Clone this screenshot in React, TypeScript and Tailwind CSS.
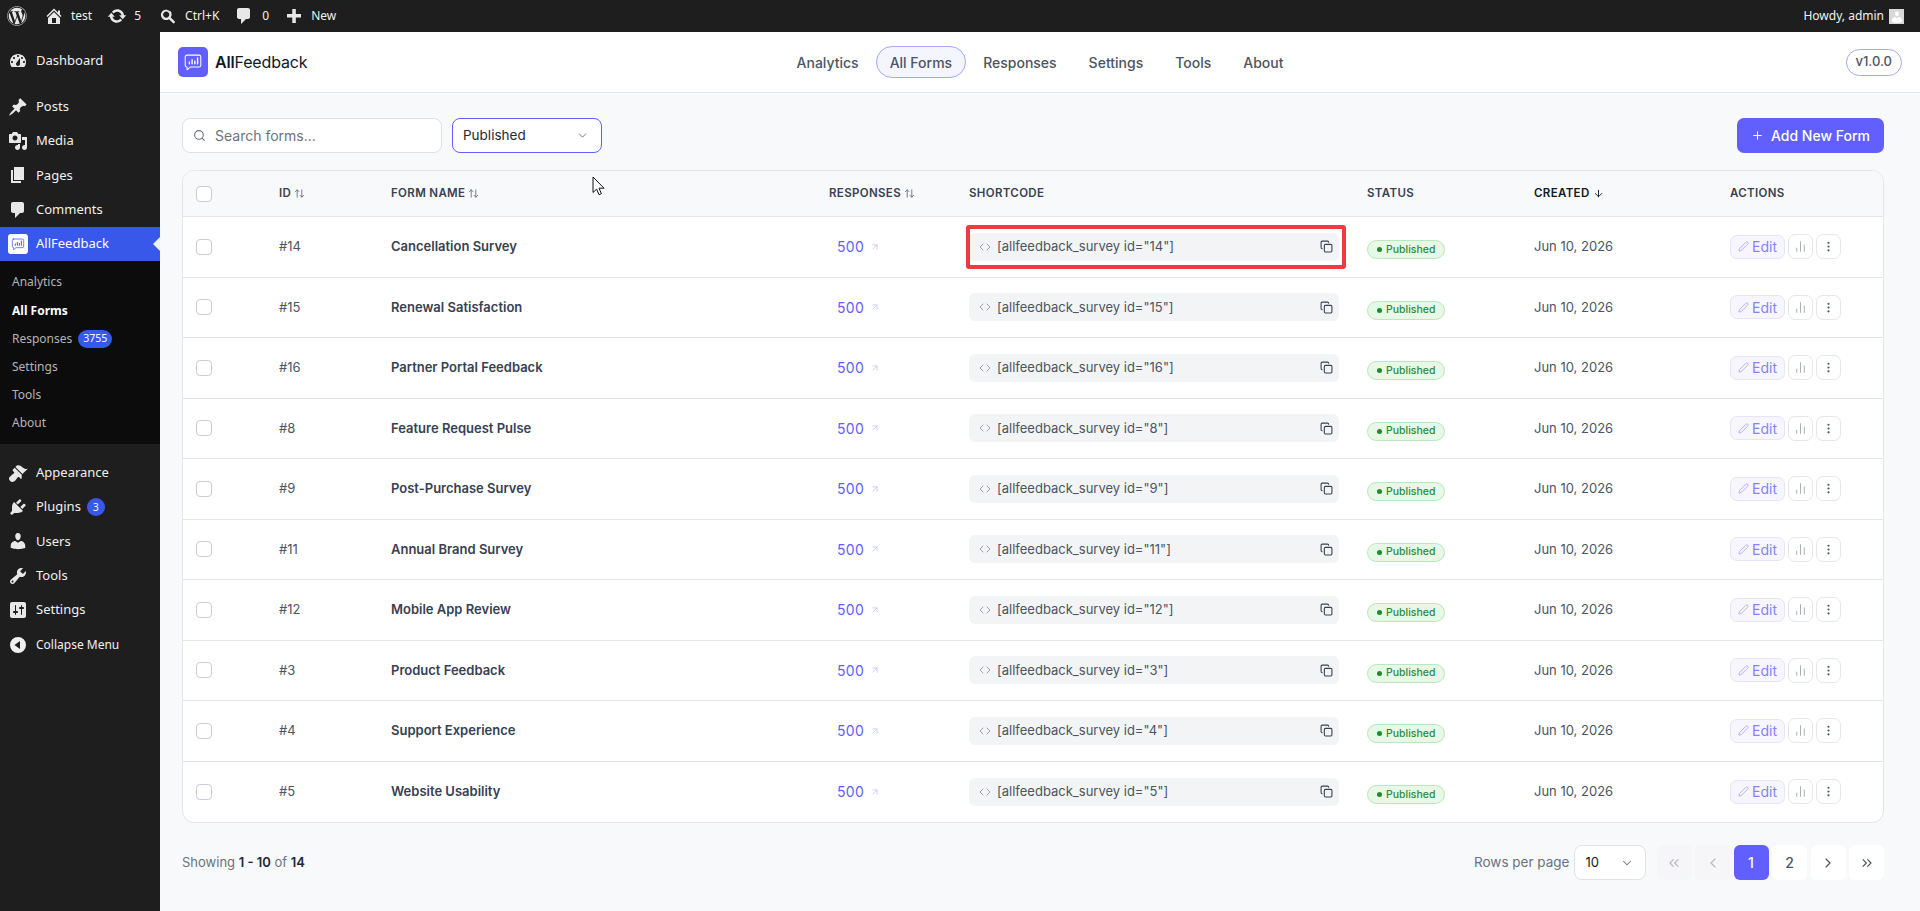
import React from "react";
import { FaWordpress } from "react-icons/fa";
import {
  ArrowDown, ArrowUpDown, ArrowUpRight, ChartNoAxesColumn, ChevronDown, ChevronLeft, ChevronRight,
  ChevronsLeft, ChevronsRight, Code, Copy, EllipsisVertical, Pen, Plus, Search,
} from "lucide-react";

const D: Record<string, string> = {
  home: "M16 8.5l1.53 1.53-1.06 1.06L10 4.62l-6.47 6.47-1.06-1.06L10 2.5l4 4v-2h2v4zm-6-2.46l6 5.99V18H4v-5.97zM12 17v-5H8v5h4z",
  update: "M10.2 3.28c3.53 0 6.43 2.61 6.92 6h2.08l-3.5 4-3.5-4h2.32c-.45-1.97-2.21-3.45-4.32-3.45-1.45 0-2.73.71-3.54 1.78L4.95 5.66C6.23 4.2 8.11 3.28 10.2 3.28zm-.4 13.44c-3.52 0-6.43-2.61-6.92-6H.8l3.5-4c1.17 1.33 2.33 2.67 3.5 4H5.48c.45 1.97 2.21 3.45 4.32 3.45 1.45 0 2.73-.71 3.54-1.78l1.71 1.95c-1.28 1.46-3.15 2.38-5.25 2.38z",
  comment: "M5 2h9c1.1 0 2 .9 2 2v7c0 1.1-.9 2-2 2h-2l-5 5v-5H5c-1.1 0-2-.9-2-2V4c0-1.1.9-2 2-2z",
  plus: "M17 8v3.5h-5.2V17H8.3v-5.5H3V8h5.3V3h3.5v5H17z",
  search: "M12.14 4.78c1.8 1.8 2 4.6.6 6.63l3.93 3.93c.4.4.4 1.05 0 1.45l-.29.29c-.4.4-1.05.4-1.45 0l-3.93-3.93c-2.03 1.4-4.83 1.2-6.63-.6-2-2-2-5.26 0-7.27 2-2 5.27-2 7.27 0zM6 6.4c-1.2 1.2-1.2 3.2 0 4.4 1.2 1.2 3.2 1.2 4.4 0 1.2-1.2 1.2-3.2 0-4.4-1.2-1.2-3.2-1.2-4.4 0z",
  dashboard: "M3.76 16h12.48c1.1-1.37 1.76-3.11 1.76-5 0-4.42-3.58-8-8-8s-8 3.58-8 8c0 1.89.66 3.63 1.76 5zM10 4c.55 0 1 .45 1 1s-.45 1-1 1-1-.45-1-1 .45-1 1-1zM6 6c.55 0 1 .45 1 1s-.45 1-1 1-1-.45-1-1 .45-1 1-1zm8 0c.55 0 1 .45 1 1s-.45 1-1 1-1-.45-1-1 .45-1 1-1zm-5.37 5.55L12 7v6c0 1.1-.9 2-2 2s-2-.9-2-2c0-.57.24-1.08.63-1.45zM4 10c.55 0 1 .45 1 1s-.45 1-1 1-1-.45-1-1 .45-1 1-1zm12 0c.55 0 1 .45 1 1s-.45 1-1 1-1-.45-1-1 .45-1 1-1z",
  post: "M10.44 3.02l1.82-1.82 6.36 6.35-1.83 1.82c-1.05-.68-2.48-.57-3.41.36l-.75.75c-.92.93-1.04 2.35-.35 3.41l-1.83 1.82-2.41-2.41-2.8 2.79c-.42.42-3.38 2.71-3.8 2.29s1.86-3.39 2.28-3.81l2.79-2.79L4.1 9.36l1.83-1.82c1.05.69 2.48.57 3.4-.36l.75-.75c.93-.92 1.05-2.35.36-3.41z",
  media: "M13 11V4c0-.55-.45-1-1-1h-1.67L9 1H5L3.67 3H2c-.55 0-1 .45-1 1v7c0 .55.45 1 1 1h10c.55 0 1-.45 1-1zM7 4.5c1.38 0 2.5 1.12 2.5 2.5S8.38 9.5 7 9.5 4.5 8.38 4.5 7 5.62 4.5 7 4.5zM14 6h5v10.5c0 1.38-1.12 2.5-2.5 2.5S14 17.88 14 16.5s1.12-2.5 2.5-2.5c.17 0 .34.02.5.05V9h-3V6zm-4 8.05V13h2v3.5c0 1.38-1.12 2.5-2.5 2.5S7 17.88 7 16.5 8.12 14 9.5 14c.17 0 .34.02.5.05z",
  page: "M6 15V2h10v13H6zm-1 1h8v2H3V5h2v11z",
  appearance: "M14.48 11.06L7.41 3.99l1.5-1.5c.5-.56 2.3-.47 3.51.32 1.21.8 1.43 1.28 2.91 2.1 1.18.64 2.45 1.26 4.45.85zm-.71.71L6.7 4.7 4.93 6.47c-.39.39-.39 1.02 0 1.41l1.06 1.06c.39.39.39 1.03 0 1.42-.6.6-1.43 1.11-2.21 1.69-.35.26-.7.53-1.01.84C1.43 13.71 1 14.65 1 15.5c0 .52.15 1.04.41 1.5.2.34.46.65.75.93h.01c.99.98 2.33 1.41 3.75.66.48-.25.96-.6 1.4-1.04.3-.3.58-.64.84-1 .58-.78 1.09-1.61 1.69-2.21.39-.39 1.03-.39 1.42 0l1.06 1.06c.39.39 1.02.39 1.41 0z",
  plugins: "M13.11 4.36L9.87 7.6 8 5.73l3.24-3.24c.35-.34 1.05-.2 1.56.32.52.51.66 1.21.31 1.55zm-8 1.77l.91-1.12 9.01 9.01-1.19.84c-.71.71-2.63 1.16-3.82 1.16H6.14L4.9 17.26c-.59.59-1.54.59-2.12 0-.59-.58-.59-1.53 0-2.12l1.24-1.24v-3.88c0-1.13.4-3.19 1.09-3.89zm7.26 3.97l3.24-3.24c.34-.35 1.04-.21 1.55.31.52.51.66 1.21.31 1.55l-3.24 3.25z",
  users: "M10 9.25c-2.27 0-2.73-3.44-2.73-3.44C7 4.02 7.82 2 9.97 2c2.16 0 2.98 2.02 2.71 3.81 0 0-.41 3.44-2.68 3.44zm0 2.57L12.72 10c2.39 0 4.52 2.33 4.52 4.53v2.49s-3.65 1.13-7.24 1.13c-3.65 0-7.24-1.13-7.24-1.13v-2.49c0-2.25 1.94-4.48 4.47-4.48z",
  tools: "M16.68 9.77c-1.34 1.34-3.3 1.67-4.95.99l-5.41 6.52c-.99.99-2.59.99-3.58 0s-.99-2.59 0-3.57l6.52-5.42c-.68-1.65-.35-3.61.99-4.95 1.28-1.28 3.12-1.62 4.72-1.06l-2.89 2.89 2.82 2.82 2.86-2.87c.53 1.58.18 3.39-1.08 4.65zM3.81 16.21c.4.39 1.04.39 1.43 0 .4-.4.4-1.04 0-1.43-.39-.4-1.03-.4-1.43 0-.39.39-.39 1.03 0 1.43z",
  settings: "M18 16V4c0-1.1-.9-2-2-2H4c-1.1 0-2 .9-2 2v12c0 1.1.9 2 2 2h12c1.1 0 2-.9 2-2zM8 11h1c.55 0 1 .45 1 1s-.45 1-1 1H8v1.5c0 .28-.22.5-.5.5s-.5-.22-.5-.5V13H6c-.55 0-1-.45-1-1s.45-1 1-1h1V5.5c0-.28.22-.5.5-.5s.5.22.5.5V11zm5-2h-1c-.55 0-1-.45-1-1s.45-1 1-1h1V5.5c0-.28.22-.5.5-.5s.5.22.5.5V7h1c.55 0 1 .45 1 1s-.45 1-1 1h-1v5.5c0 .28-.22.5-.5.5s-.5-.22-.5-.5V9z",
  collapse: "M10 2a8 8 0 1 0 0 16 8 8 0 0 0 0-16zm2 4v8L6.5 10 12 6z",
};

function Dash({ name, className }: { name: string; className?: string }) {
  return (
    <svg viewBox="0 0 20 20" className={className} fill="currentColor" fillRule="evenodd" clipRule="evenodd">
      <path d={D[name]} />
    </svg>
  );
}

function ChatLogo({ className, stroke }: { className?: string; stroke: string }) {
  return (
    <svg viewBox="0 0 24 24" className={className} fill="none" stroke={stroke} strokeWidth="1.1" strokeLinecap="round" strokeLinejoin="round">
      <path d="M5.5 4.5h13a2 2 0 0 1 2 2v9a2 2 0 0 1-2 2H9l-3.5 3v-3a2 2 0 0 1-2-2v-9a2 2 0 0 1 2-2z" />
      <path strokeWidth="1.5" d="M8 14v-2M11 14V9.5M14 14v-3M17 14V7.5" />
    </svg>
  );
}

const topMenu = [
  { icon: "dashboard", label: "Dashboard" },
];
const contentMenu = [
  { icon: "post", label: "Posts" },
  { icon: "media", label: "Media" },
  { icon: "page", label: "Pages" },
  { icon: "comment", label: "Comments" },
];
const bottomMenu = [
  { icon: "appearance", label: "Appearance" },
  { icon: "plugins", label: "Plugins", badge: "3" },
  { icon: "users", label: "Users" },
  { icon: "tools", label: "Tools" },
  { icon: "settings", label: "Settings" },
];

function MenuItem({ icon, label, badge }: { icon: string; label: string; badge?: string }) {
  return (
    <div className="h-[34.4px] flex items-center text-[13px] text-[#f0f0f0]">
      <span className="w-[36px] flex justify-center text-[#e8e8e8]">
        <Dash name={icon} className="w-[20px] h-[20px]" />
      </span>
      <span>{label}</span>
      {badge && (
        <span className="ml-[6px] w-[18px] h-[18px] rounded-full bg-[#3858e9] text-white text-[10px] flex items-center justify-center">
          {badge}
        </span>
      )}
    </div>
  );
}

function Sidebar() {
  return (
    <aside className="w-[160px] shrink-0 bg-[#1e1e1e] pt-[12px] font-['Noto_Sans',sans-serif]">
      {topMenu.map((m) => <MenuItem key={m.label} {...m} />)}
      <div className="h-[11px]" />
      {contentMenu.map((m) => <MenuItem key={m.label} {...m} />)}
      <div className="relative h-[34.4px] flex items-center bg-[#3858e9] text-white text-[13px]">
        <span className="w-[36px] flex justify-center">
          <span className="w-[20px] h-[20px] rounded-[3px] bg-white flex items-center justify-center">
            <ChatLogo className="w-[16px] h-[16px]" stroke="#3858e9" />
          </span>
        </span>
        <span>AllFeedback</span>
        <span className="absolute right-0 top-[10px] w-0 h-0 border-y-[7px] border-y-transparent border-r-[7px] border-r-[#f0f0f1]" />
      </div>
      <div className="bg-[#0c0c0c] py-[7px] text-[12px] text-[#b4b4b4]">
        <div className="h-[28.2px] pl-[12px] flex items-center">Analytics</div>
        <div className="h-[28.2px] pl-[12px] flex items-center font-bold text-white">All Forms</div>
        <div className="h-[28.2px] pl-[12px] flex items-center">
          Responses
          <span className="ml-[6px] h-[18px] px-[5px] rounded-full bg-[#3858e9] text-white text-[10.5px] flex items-center">3755</span>
        </div>
        <div className="h-[28.2px] pl-[12px] flex items-center">Settings</div>
        <div className="h-[28.2px] pl-[12px] flex items-center">Tools</div>
        <div className="h-[28.2px] pl-[12px] flex items-center">About</div>
      </div>
      <div className="h-[11px]" />
      {bottomMenu.map((m) => <MenuItem key={m.label} {...m} />)}
      <div className="h-[34.4px] flex items-center text-[12px] text-[#f0f0f0]">
        <span className="w-[36px] flex justify-center">
          <Dash name="collapse" className="w-[20px] h-[20px]" />
        </span>
        <span>Collapse Menu</span>
      </div>
    </aside>
  );
}

function AdminBar() {
  const Item = ({ icon, label, cls }: { icon: string; label: string; cls: string }) => (
    <div className={`flex items-center ${cls}`}>
      <Dash name={icon} className="w-[20px] h-[20px] text-[#e8e8e8]" />
      <span>{label}</span>
    </div>
  );
  return (
    <header className="h-[32px] shrink-0 bg-[#1e1e1e] text-[#f0f0f0] text-[12px] flex items-center pl-[7px] pr-[16px] font-['Noto_Sans',sans-serif]">
      <FaWordpress className="w-[20px] h-[20px] text-[#e8e8e8]" />
      <Item icon="home" label="test" cls="ml-[17px] gap-[7px]" />
      <Item icon="update" label="5" cls="ml-[15px] gap-[7px]" />
      <Item icon="search" label="Ctrl+K" cls="ml-[17px] gap-[7px]" />
      <Item icon="comment" label="0" cls="ml-[15px] gap-[8px]" />
      <Item icon="plus" label="New" cls="ml-[15px] gap-[7px]" />
      <div className="ml-auto flex items-center gap-[5px]">
        <span>Howdy, admin</span>
        <span className="w-[15px] h-[15px] bg-[#d8d8d8] flex items-end justify-center overflow-hidden">
          <Dash name="users" className="w-[14px] h-[14px] text-white" />
        </span>
      </div>
    </header>
  );
}

const navItems = ["Analytics", "All Forms", "Responses", "Settings", "Tools", "About"];

function AppHeader() {
  return (
    <div className="h-[61px] shrink-0 bg-white border-b border-[#e2e5ea] grid grid-cols-[1fr_auto_1fr] items-center pl-[18px] pr-[18px]">
      <div className="flex items-center gap-[7px]">
        <span className="w-[30px] h-[30px] rounded-[5px] bg-[#6160ff] flex items-center justify-center">
          <ChatLogo className="w-[22px] h-[22px]" stroke="#ffffff" />
        </span>
        <span className="text-[16px] text-[#111827] tracking-[-0.01em]"><span className="font-semibold">All</span>Feedback</span>
      </div>
      <nav className="flex items-center gap-[2px] text-[14px] font-medium text-[#4b5563]">
        {navItems.map((n) =>
          n === "All Forms" ? (
            <span key={n} className="h-[32px] px-[13px] flex items-center rounded-full border border-[#a5a8f8] bg-[#f5f5ff]">{n}</span>
          ) : (
            <span key={n} className="h-[32px] px-[14px] flex items-center border border-transparent">{n}</span>
          ),
        )}
      </nav>
      <div className="flex justify-end">
        <span className="h-[27px] px-[9px] rounded-full border border-[#a5a8f8] text-[13px] font-medium text-[#4b5563] flex items-center">v1.0.0</span>
      </div>
    </div>
  );
}

const rows = [
  ["14", "Cancellation Survey"],
  ["15", "Renewal Satisfaction"],
  ["16", "Partner Portal Feedback"],
  ["8", "Feature Request Pulse"],
  ["9", "Post-Purchase Survey"],
  ["11", "Annual Brand Survey"],
  ["12", "Mobile App Review"],
  ["3", "Product Feedback"],
  ["4", "Support Experience"],
  ["5", "Website Usability"],
];

const gridCols = "grid grid-cols-[96px_112px_438px_140px_398px_167px_196px_1fr] items-center";

function Checkbox() {
  return <span className="block ml-[13px] w-[16px] h-[16px] rounded-[4px] border border-[#c9ccd3] bg-white" />;
}

function Th({ children, sort, dark }: { children: React.ReactNode; sort?: boolean; dark?: boolean }) {
  return (
    <div className={`flex items-center gap-[3px] text-[11.5px] font-semibold uppercase tracking-[0.03em] ${dark ? "text-[#111827]" : "text-[#374151]"}`}>
      {children}
      {sort && <ArrowUpDown className="w-[11px] h-[11px] text-[#6b7280]" strokeWidth={2} />}
    </div>
  );
}

function Row({ id, name, last, first }: { id: string; name: string; last: boolean; first: boolean }) {
  return (
    <div className={`${gridCols} h-[60.5px] ${last ? "" : "border-b border-[#e2e5ea]"}`}>
      <Checkbox />
      <div className="text-[13px] text-[#4b5563]">#{id}</div>
      <div className="text-[13px] font-semibold text-[#374151]">{name}</div>
      <div className="pl-[8px] flex items-center gap-[6px] text-[14px] text-[#6160ff] tracking-[0.02em]">
        500
        <ArrowUpRight className="w-[10px] h-[10px] text-[#c4c4fb]" strokeWidth={2} />
      </div>
      <div className="relative">
        <div className="w-[370px] h-[28px] rounded-[6px] bg-[#f3f4f6] flex items-center pl-[10px] pr-[6px] text-[13px] text-[#4b5563]">
          <Code className="w-[12px] h-[12px] text-[#9ca3af] mr-[6px]" strokeWidth={2} />
          <span>[allfeedback_survey id="{id}"]</span>
          <Copy className="ml-auto w-[13px] h-[13px] text-[#374151]" strokeWidth={2} />
        </div>
        {first && <div className="absolute left-[-3px] top-[-8px] w-[380px] h-[44px] rounded-[3px] border-[4px] border-[#ef3a3e] pointer-events-none" />}
      </div>
      <div>
        <span className="inline-flex items-center gap-[4px] h-[19px] w-[78px] pl-[9px] rounded-full bg-[#e7f8e7] border border-[#b8e8bb] text-[10.5px] font-medium text-[#2e8b3a]">
          <span className="w-[5px] h-[5px] rounded-full bg-[#1f8a2f]" />
          Published
        </span>
      </div>
      <div className="text-[13px] text-[#4b5563]">Jun 10, 2026</div>
      <div className="flex items-center gap-[3px]">
        <span className="h-[24px] w-[55px] rounded-[7px] border border-[#e6e4f6] bg-[#f7f6ff] flex items-center justify-center gap-[3px] text-[14px] text-[#8583fb]">
          <Pen className="w-[11px] h-[11px] text-[#a5a3fb]" strokeWidth={1.8} />
          Edit
        </span>
        <span className="h-[25px] w-[25px] rounded-[7px] border border-[#e5e7eb] bg-white flex items-center justify-center">
          <ChartNoAxesColumn className="w-[13px] h-[13px] text-[#9ca3af]" strokeWidth={1.6} />
        </span>
        <span className="h-[25px] w-[25px] rounded-[7px] border border-[#e5e7eb] bg-white flex items-center justify-center">
          <EllipsisVertical className="w-[13px] h-[13px] text-[#4b5563]" strokeWidth={2} />
        </span>
      </div>
    </div>
  );
}

function FormsTable() {
  return (
    <div className="mt-[17px] rounded-[12px] border border-[#e2e5ea] bg-white overflow-visible">
      <div className={`${gridCols} h-[46px] bg-[#f8f9fb] rounded-t-[12px] border-b border-[#e2e5ea]`}>
        <Checkbox />
        <Th sort>ID</Th>
        <Th sort>Form Name</Th>
        <Th sort>Responses</Th>
        <Th>Shortcode</Th>
        <Th>Status</Th>
        <Th dark>
          Created
          <ArrowDown className="w-[11px] h-[11px] text-[#111827]" strokeWidth={2} />
        </Th>
        <Th>Actions</Th>
      </div>
      {rows.map(([id, name], i) => (
        <Row key={id} id={id} name={name} first={i === 0} last={i === rows.length - 1} />
      ))}
    </div>
  );
}

function PageBtn({ children, kind }: { children: React.ReactNode; kind?: "active" | "disabled" }) {
  const cls =
    kind === "active" ? "bg-[#6160ff] text-white" : kind === "disabled" ? "bg-[#f6f6f8] text-[#b5b8bf]" : "bg-white text-[#4b5563]";
  return <span className={`w-[35px] h-[35px] rounded-[6px] flex items-center justify-center text-[14px] font-medium ${cls}`}>{children}</span>;
}

function Footer() {
  return (
    <div className="mt-[22px] flex items-center justify-between">
      <div className="text-[13px] text-[#6b7280]">
        Showing <span className="font-semibold text-[#1f2937]">1 - 10</span> of <span className="font-semibold text-[#1f2937]">14</span>
      </div>
      <div className="flex items-center">
        <span className="text-[13.5px] text-[#6b7280] mr-[4px]">Rows per page</span>
        <span className="w-[72px] h-[35px] rounded-[8px] border border-[#dfe1e6] bg-white flex items-center justify-between pl-[11px] pr-[11px] text-[13px] text-[#111827]">
          10
          <ChevronDown className="w-[14px] h-[14px] text-[#6b7280]" strokeWidth={1.75} />
        </span>
        <div className="ml-[11px] flex items-center gap-[3.5px]">
          <PageBtn kind="disabled"><ChevronsLeft className="w-[16px] h-[16px]" strokeWidth={1.75} /></PageBtn>
          <PageBtn kind="disabled"><ChevronLeft className="w-[16px] h-[16px]" strokeWidth={1.75} /></PageBtn>
          <PageBtn kind="active">1</PageBtn>
          <PageBtn>2</PageBtn>
          <PageBtn><ChevronRight className="w-[16px] h-[16px]" strokeWidth={1.75} /></PageBtn>
          <PageBtn><ChevronsRight className="w-[16px] h-[16px]" strokeWidth={1.75} /></PageBtn>
        </div>
      </div>
    </div>
  );
}

export default function App() {
  return (
    <div className="h-screen flex flex-col overflow-hidden relative font-['Inter',sans-serif]">
      <AdminBar />
      <div className="flex-1 flex min-h-0">
        <Sidebar />
        <main className="flex-1 min-w-0 flex flex-col bg-[#f8f9fb]">
          <AppHeader />
          <div className="pl-[22px] pr-[36px] pt-[25px]">
            <div className="flex items-center">
              <div className="w-[260px] h-[35px] rounded-[8px] border border-[#dfe1e6] bg-white flex items-center pl-[10px] gap-[9px] text-[14px] text-[#6b7280]">
                <Search className="w-[13px] h-[13px] text-[#6b7280]" strokeWidth={2} />
                <span>Search forms...</span>
              </div>
              <div className="ml-[10px] w-[150px] h-[35px] rounded-[8px] border border-[#6160ff] bg-white flex items-center justify-between pl-[10px] pr-[12px] text-[13.5px] text-[#1f2937]">
                Published
                <ChevronDown className="w-[13px] h-[13px] text-[#6b7280]" strokeWidth={1.75} />
              </div>
              <div className="ml-auto w-[147px] h-[35px] rounded-[7px] bg-[#6160ff] text-white text-[14px] font-medium flex items-center justify-center gap-[7px]">
                <Plus className="w-[13px] h-[13px]" strokeWidth={2} />
                Add New Form
              </div>
            </div>
            <FormsTable />
            <Footer />
          </div>
        </main>
      </div>
      <svg viewBox="0 0 13 20" className="absolute left-[592px] top-[176px] w-[13px] h-[20px]">
        <path d="M1 1v15.5l3.6-3.4 2.4 5.6 2.4-1-2.4-5.5h5z" fill="#fff" stroke="#111" strokeWidth="1" strokeLinejoin="round" />
      </svg>
    </div>
  );
}
